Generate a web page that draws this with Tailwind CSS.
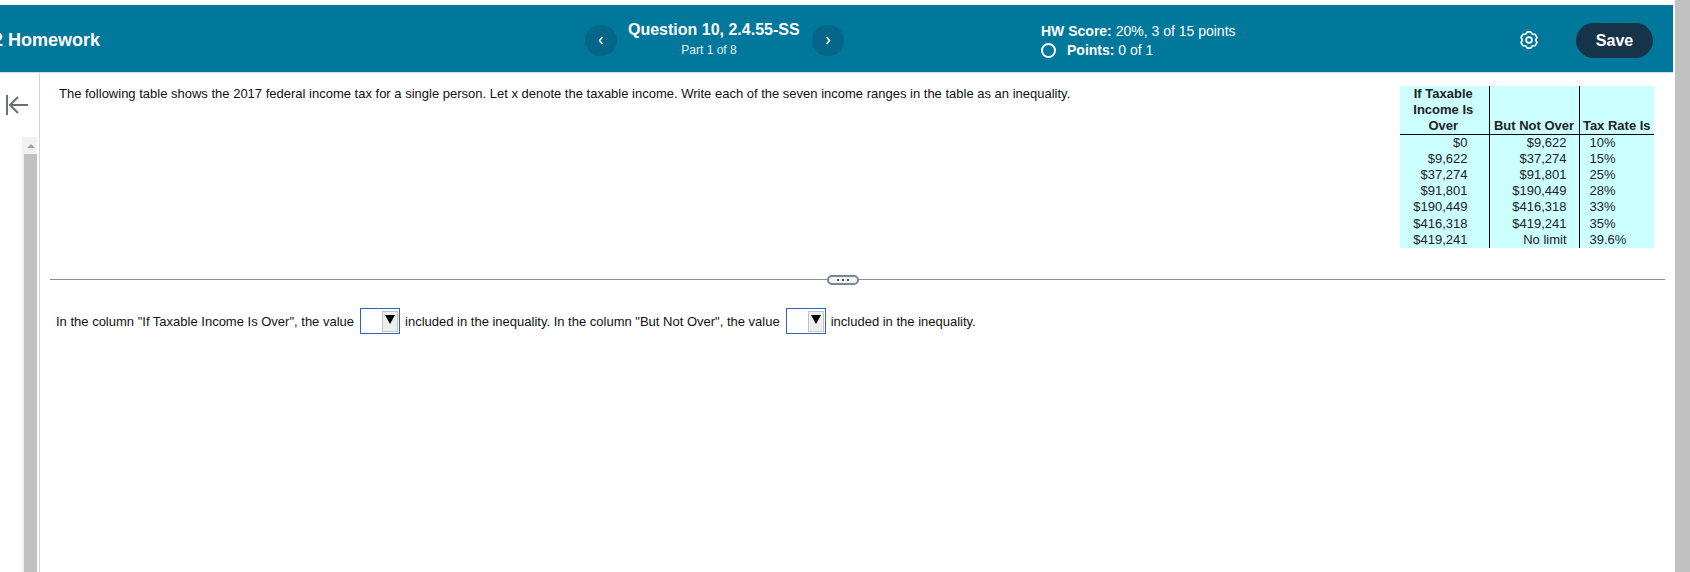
<!DOCTYPE html>
<html><head><meta charset="utf-8"><script src="https://cdn.jsdelivr.net/npm/@tailwindcss/browser@4"></script></head>
<body class="bg-white overflow-hidden">
<div class="flex w-[1690px] h-[572px] overflow-hidden font-['Liberation_Sans',Arial,sans-serif] text-[#222]">
  <div class="w-[1673px] flex flex-col">
    <header class="mt-[5px] h-[67px] bg-[#00789c] text-white flex items-center shrink-0 overflow-hidden">
      <div class="w-[592px] shrink-0 -ml-[7px] mt-[3px] text-[18px] font-bold whitespace-nowrap">2 Homework</div>
      <button class="w-[32px] h-[31px] rounded-full bg-[#05668a] flex items-center justify-center shrink-0 mt-[4px]">
        <svg width="6" height="9" viewBox="0 0 6 9" fill="none" stroke="white" stroke-width="1.5"><path d="M4.5 1 1.5 4.5 4.5 8"/></svg>
      </button>
      <div class="w-[172px] ml-[11px] shrink-0 text-center mt-[1px]">
        <div class="text-[16px] leading-[20px] font-bold whitespace-nowrap text-left">Question 10, 2.4.55-SS</div>
        <div class="text-[12px] leading-[16px] mt-[2px] pr-[10px] text-white/90">Part 1 of 8</div>
      </div>
      <button class="w-[32px] h-[31px] ml-[12px] rounded-full bg-[#05668a] flex items-center justify-center shrink-0 mt-[4px]">
        <svg width="6" height="9" viewBox="0 0 6 9" fill="none" stroke="white" stroke-width="1.5"><path d="M1.5 1 4.5 4.5 1.5 8"/></svg>
      </button>
      <div class="ml-[197px] w-[300px] shrink-0 text-[14px] mt-[4px]">
        <div class="leading-[19px]"><b>HW Score:</b> 20%, 3 of 15 points</div>
        <div class="leading-[19px] flex items-center"><span class="w-[15px] h-[15px] rounded-full border-2 border-white mr-[11px]"></span><span><b>Points:</b> 0 of 1</span></div>
      </div>
      <svg class="ml-[178px] mt-[2px] shrink-0" width="20" height="20" viewBox="0 0 24 24" fill="none" stroke="white" stroke-width="2" stroke-linejoin="round"><path d="M14.08 2.22 16 5.07 19.43 5.31 21.51 8.91 20 12 21.51 15.09 19.43 18.69 16 18.93 14.08 21.78H9.92L8 18.93 4.57 18.69 2.49 15.09 4 12 2.49 8.91 4.57 5.31 8 5.07 9.92 2.22Z"/><circle cx="12" cy="12" r="3.5"/></svg>
      <button class="ml-[37px] w-[77px] h-[35px] rounded-full bg-[#15344a] text-white text-[16px] font-bold shrink-0 mt-[4px]">Save</button>
    </header>
    <div class="flex-1 flex border-t border-[#d5dbe0]">
      <aside class="w-[40px] border-r border-[#d0d3dc] shrink-0 flex flex-col">
        <svg class="ml-[6px] mt-[22px] shrink-0" width="22" height="20" viewBox="0 0 22 20" fill="none" stroke="#6b7070" stroke-width="2"><path d="M1 0V20M22 10H4M12 2 4 10 12 18"/></svg>
        <div class="ml-[22px] mt-[22px] w-[15px] flex-1 bg-[#f1f1f1] pl-[2px] flex flex-col">
          <div class="h-[17px] flex justify-center items-center"><span class="w-0 h-0 border-l-[4px] border-r-[4px] border-b-[4px] border-l-transparent border-r-transparent border-b-[#a3a3a3]"></span></div>
          <div class="flex-1 bg-[#c1c1c1]"></div>
        </div>
      </aside>
      <main class="flex-1 min-w-0 flex flex-col pl-[10px]">
        <div class="h-[206px] flex justify-between shrink-0">
          <p class="text-[13px] leading-[15px] pl-[9px] pt-[13px] text-[#111]">The following table shows the 2017 federal income tax for a single person. Let x denote the taxable income. Write each of the seven income ranges in the table as an inequality.</p>
          <table class="mr-[19px] mt-[13px] h-[162px] w-[254px] bg-[#ccffff] text-[13px] leading-[16px] text-[#222] border-collapse table-fixed self-start">
            <thead>
              <tr class="font-bold">
                <th class="w-[89px] h-[48px] p-0 align-bottom text-center font-bold border-b border-black"><div class="h-[47px] flex flex-col justify-end pr-[2px]"><div>If Taxable<br>Income Is<br>Over</div></div></th>
                <th class="w-[90px] align-bottom text-center font-bold border-l border-b border-black whitespace-nowrap"><div class="h-[47px] flex flex-col justify-end"><div>But Not Over</div></div></th>
                <th class="align-bottom text-center font-bold border-l border-b border-black whitespace-nowrap"><div class="h-[47px] flex flex-col justify-end"><div>Tax Rate Is</div></div></th>
              </tr>
            </thead>
            <tbody>
              <tr class="h-[16px]"><td class="text-right pr-[21px]">$0</td><td class="text-right pr-[12px] border-l border-black">$9,622</td><td class="pl-[10px] border-l border-black">10%</td></tr>
              <tr class="h-[16px]"><td class="text-right pr-[21px]">$9,622</td><td class="text-right pr-[12px] border-l border-black">$37,274</td><td class="pl-[10px] border-l border-black">15%</td></tr>
              <tr class="h-[16px]"><td class="text-right pr-[21px]">$37,274</td><td class="text-right pr-[12px] border-l border-black">$91,801</td><td class="pl-[10px] border-l border-black">25%</td></tr>
              <tr class="h-[16px]"><td class="text-right pr-[21px]">$91,801</td><td class="text-right pr-[12px] border-l border-black">$190,449</td><td class="pl-[10px] border-l border-black">28%</td></tr>
              <tr class="h-[16px]"><td class="text-right pr-[21px]">$190,449</td><td class="text-right pr-[12px] border-l border-black">$416,318</td><td class="pl-[10px] border-l border-black">33%</td></tr>
              <tr class="h-[16px]"><td class="text-right pr-[21px]">$416,318</td><td class="text-right pr-[12px] border-l border-black">$419,241</td><td class="pl-[10px] border-l border-black">35%</td></tr>
              <tr class="h-[16px]"><td class="text-right pr-[21px]">$419,241</td><td class="text-right pr-[12px] border-l border-black">No limit</td><td class="pl-[10px] border-l border-black">39.6%</td></tr>
            </tbody>
          </table>
        </div>
        <div class="relative h-px bg-[#8a8d9c] mr-[8px] shrink-0">
          <div class="absolute left-[777px] top-[-4px] w-[32px] h-[10px] rounded-full border-2 border-[#7d8590] bg-[#f3f5f7] flex items-center justify-center gap-[3px]">
            <span class="w-[2px] h-[2px] bg-[#555b66]"></span><span class="w-[2px] h-[2px] bg-[#555b66]"></span><span class="w-[2px] h-[2px] bg-[#555b66]"></span>
          </div>
        </div>
        <div class="pl-[6px] pt-[28px] flex items-center text-[13px] leading-[15px] whitespace-nowrap text-[#111]">
          <span>In the column "If Taxable Income Is Over", the value</span>
          <span class="ml-[6px] mr-[5px] w-[40px] h-[26px] border border-[#2f62c4] flex justify-end pt-[2px] shrink-0"><span class="w-[16px] h-[21px] mr-[1px] bg-[#eeeeee] border border-[#c4c4c4] flex justify-center pt-[3px]"><span class="w-0 h-0 border-l-[5px] border-r-[5px] border-t-[9px] border-l-transparent border-r-transparent border-t-black"></span></span></span>
          <span>included in the inequality. In the column "But Not Over", the value</span>
          <span class="ml-[6px] mr-[5px] w-[40px] h-[26px] border border-[#2f62c4] flex justify-end pt-[2px] shrink-0"><span class="w-[16px] h-[21px] mr-[1px] bg-[#eeeeee] border border-[#c4c4c4] flex justify-center pt-[3px]"><span class="w-0 h-0 border-l-[5px] border-r-[5px] border-t-[9px] border-l-transparent border-r-transparent border-t-black"></span></span></span>
          <span>included in the inequality.</span>
        </div>
      </main>
    </div>
  </div>
  <div class="ml-[2px] w-[15px] bg-[#c1c1c1] shrink-0"></div>
</div>
</body></html>
